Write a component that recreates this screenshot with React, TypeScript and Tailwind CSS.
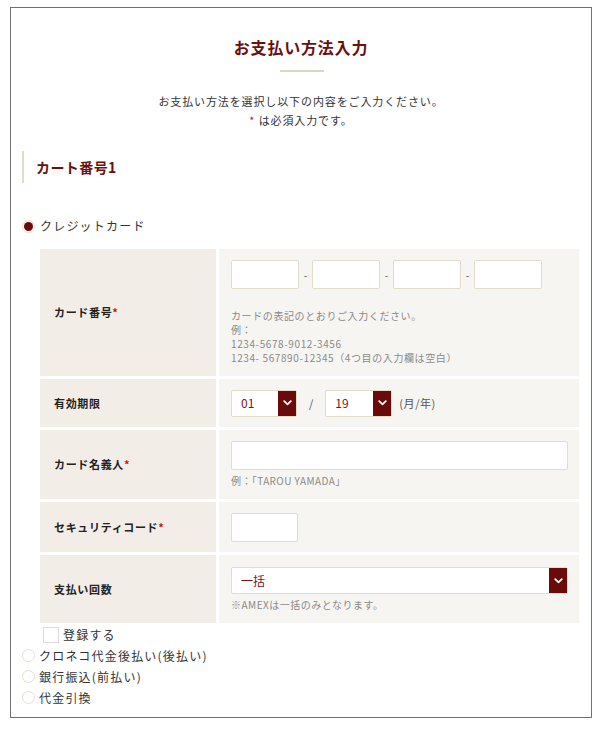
import React from "react";

const font = { fontFamily: '"Noto Sans CJK JP", "Noto Sans", sans-serif' };

function Chevron() {
  return (
    <svg width="9" height="6" viewBox="0 0 9 6" fill="none">
      <path d="M1.2 1.2 L4.5 4.4 L7.8 1.2" stroke="#fff" strokeWidth="1.8" strokeLinecap="round" strokeLinejoin="round" />
    </svg>
  );
}

function Select({ value, className }: { value: string; className: string }) {
  return (
    <div className={`flex h-[27px] items-stretch rounded-[2px] border border-[#e3dccb] bg-white ${className}`}>
      <div className="flex flex-1 items-center pl-[9px] text-[12px] text-[#7a1414]">{value}</div>
      <div className="flex w-[18px] items-center justify-center bg-[#6b0a0a]">
        <Chevron />
      </div>
    </div>
  );
}

function Label({ children, req }: { children: React.ReactNode; req?: boolean }) {
  return (
    <div className="flex items-center bg-[#f2eee7] pl-[14px] text-[11px] font-bold tracking-[0.06em] text-[#222]">
      {children}
      {req && <span className="text-[#d0101b]">*</span>}
    </div>
  );
}

function EmptyRadio({ label }: { label: string }) {
  return (
    <div className="flex h-[21px] items-center">
      <span className="mr-[4px] h-[13px] w-[13px] rounded-full border border-[#e6e0d2] bg-white" />
      <span className="text-[12px] tracking-[0.1em] text-[#333]">{label}</span>
    </div>
  );
}

export default function App() {
  return (
    <div className="min-h-[731px] bg-white pl-[10px] pt-[7px]" style={font}>
      <div className="flex h-[711px] w-[582px] flex-col border border-[#707070] pl-[11px]">
        <div className="mt-[27px] mr-[11px] text-center text-[16px] font-bold leading-[24px] tracking-[0.05em] text-[#6b0f0f]">
          お支払い方法入力
        </div>
        <div className="mx-auto mt-[11px] h-[2px] w-[44px] bg-[#ddd5c3]" style={{ transform: "translateX(-5px)" }} />
        <div className="mt-[20px] mr-[11px] text-center text-[11px] leading-[19px] tracking-[0.08em] text-[#333]">
          <div>お支払い方法を選択し以下の内容をご入力ください。</div>
          <div>
            <span className="text-[#d0101b]">*</span> は必須入力です。
          </div>
        </div>
        <div className="mt-[21px] flex h-[32px] items-center border-l-2 border-[#e4dccb] pl-[12px] text-[14px] font-bold tracking-[0.03em] text-[#6b0f0f]">
          カート番号1
        </div>
        <div className="mt-[33px] flex h-[20px] items-center">
          <span className="mr-[5px] flex h-[13px] w-[13px] items-center justify-center rounded-full border border-[#e6e0d2] bg-white">
            <span className="h-[9px] w-[9px] rounded-full bg-[#6b0a0a]" />
          </span>
          <span className="text-[12px] tracking-[0.1em] text-[#333]">クレジットカード</span>
        </div>
        <div className="ml-[18px] mt-[13px] grid w-[539px] grid-cols-[176px_360px] grid-rows-[127px_48px_69px_50px_68px] gap-[3px]">
          <Label req>カード番号</Label>
          <div className="bg-[#f6f5f2] pl-[12px] pt-[11px]">
            <div className="flex items-center">
              {[0, 1, 2, 3].map((i) => (
                <React.Fragment key={i}>
                  {i > 0 && <span className="w-[13px] text-center text-[10px] text-[#555]">-</span>}
                  <div className="h-[29px] w-[68px] rounded-[2px] border border-[#e3dccb] bg-white" />
                </React.Fragment>
              ))}
            </div>
            <div className="mt-[20px] text-[10px] leading-[14px] tracking-[0.06em] text-[#8a8a8a]">
              <div>カードの表記のとおりご入力ください。</div>
              <div>例：</div>
              <div>1234-5678-9012-3456</div>
              <div>1234- 567890-12345（4つ目の入力欄は空白）</div>
            </div>
          </div>

          <Label>有効期限</Label>
          <div className="flex items-center bg-[#f6f5f2] pl-[12px]">
            <Select value="01" className="w-[66px]" />
            <span className="mx-[12px] text-[11px] text-[#555]">/</span>
            <Select value="19" className="w-[67px]" />
            <span className="ml-[7px] text-[11px] tracking-[0.05em] text-[#555]">(月/年)</span>
          </div>

          <Label req>カード名義人</Label>
          <div className="bg-[#f6f5f2] pl-[12px] pt-[11px]">
            <div className="h-[29px] w-[337px] rounded-[2px] border border-[#e3dccb] bg-white" />
            <div className="mt-[4px] text-[10px] leading-[14px] tracking-[0.04em] text-[#8a8a8a]">例：「TAROU YAMADA」</div>
          </div>

          <Label req>セキュリティコード</Label>
          <div className="bg-[#f6f5f2] pl-[12px] pt-[11px]">
            <div className="h-[29px] w-[67px] rounded-[2px] border border-[#e3dccb] bg-white" />
          </div>

          <Label>支払い回数</Label>
          <div className="bg-[#f6f5f2] pl-[12px] pt-[12px]">
            <Select value="一括" className="w-[337px]" />
            <div className="mt-[4px] text-[10px] leading-[14px] tracking-[0.05em] text-[#8a8a8a]">※AMEXは一括のみとなります。</div>
          </div>
        </div>
        <div className="ml-[21px] mt-[3px] flex h-[17px] items-center">
          <span className="mr-[4px] h-[16px] w-[16px] border border-[#ddd] bg-white" />
          <span className="text-[12px] tracking-[0.1em] text-[#333]">登録する</span>
        </div>
        <div className="mt-[2px]">
          <EmptyRadio label="クロネコ代金後払い(後払い)" />
          <EmptyRadio label="銀行振込(前払い)" />
          <EmptyRadio label="代金引換" />
        </div>
      </div>
    </div>
  );
}
